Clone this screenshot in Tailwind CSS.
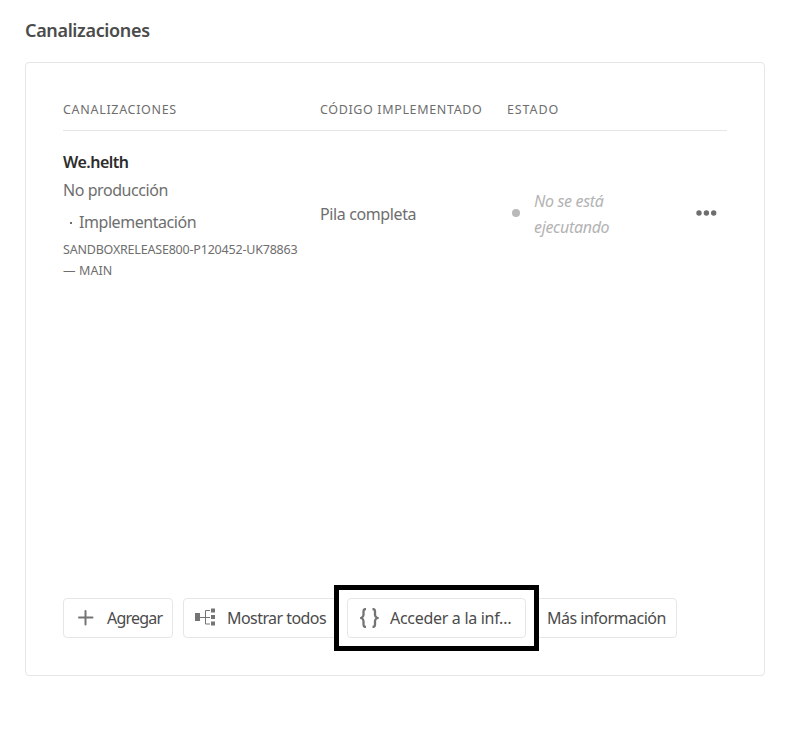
<!DOCTYPE html>
<html lang="es">
<head>
<meta charset="utf-8">
<title>Canalizaciones</title>
<script src="https://cdn.jsdelivr.net/npm/@tailwindcss/browser@4"></script>
</head>
<body class="h-[733px] overflow-hidden bg-white px-[25px] pt-[16px] font-['Noto_Sans','Open_Sans',sans-serif] text-[16px] tracking-[-0.44px] text-[#6e6e6e]">
<h1 class="h-[46px] text-[18px] leading-[28px] font-semibold tracking-[-0.35px] whitespace-nowrap text-[#4b4b4b]">Canalizaciones</h1>
<section class="flex h-[614px] w-[740px] flex-col rounded-[4px] border border-[#e6e6e6] px-[37px] pt-[35px] pb-[37px]">
  <div class="grid h-[33px] w-[664px] grid-cols-[257px_187px_1fr] border-b border-[#e6e6e6] text-[12.5px] leading-[24px] tracking-[0.69px] whitespace-nowrap">
    <div>CANALIZACIONES</div>
    <div class="tracking-[0.64px]">CÓDIGO IMPLEMENTADO</div>
    <div class="tracking-[0.9px]">ESTADO</div>
  </div>
  <div class="grid h-[165px] w-[664px] grid-cols-[257px_187px_1fr_auto] items-center whitespace-nowrap">
    <div class="flex flex-col">
      <span class="h-[28px] leading-[30px] font-semibold tracking-[-0.5px] text-[#2c2c2c]">We.helth</span>
      <span class="h-[28px] leading-[30px]">No producción</span>
      <span class="flex h-[36px] items-center pt-[2px] pl-[7px]"><i class="mt-[2px] mr-[7px] h-[2px] w-[2px] bg-[#6e6e6e]"></i>Implementación</span>
      <span class="text-[12.5px] leading-[21px] tracking-[-0.2px]">SANDBOXRELEASE800-P120452-UK78863<br><span class="tracking-[0.1px]">— MAIN</span></span>
    </div>
    <div class="tracking-[-0.38px]">Pila completa</div>
    <div class="flex items-center pl-[5px] leading-[26px] tracking-[-0.33px] text-[#b3b3b3]">
      <i class="mr-[14px] mb-[2px] h-2 w-2 rounded-full bg-[#b9b9b9]"></i>
      <em>No se está<br>ejecutando</em>
    </div>
    <svg class="mr-[10px] mb-[1px] h-[6px] w-[21px] fill-[#6e6e6e]" viewBox="0 0 21 6"><circle cx="3" cy="3" r="2.7"/><circle cx="10.4" cy="3" r="2.7"/><circle cx="17.7" cy="3" r="2.7"/></svg>
  </div>
  <div class="relative mt-auto flex h-10 whitespace-nowrap text-[#4b4b4b]">
    <button class="mr-[10px] flex h-10 w-[110px] items-center rounded-[4px] border border-[#e6e6e6] pl-[14px] tracking-[-0.8px]">
      <svg class="mr-[13px] h-4 w-4 shrink-0 stroke-[#747474]" viewBox="0 0 16 16" fill="none" stroke-width="2" stroke-linecap="round"><path d="M7.500 1v13.500M1 7.500h13.500"/></svg>
      Agregar
    </button>
    <button class="mr-[10px] flex h-10 w-[154px] items-center rounded-[4px] border border-[#e6e6e6] pl-[11px] tracking-[-0.56px]">
      <svg class="mr-[11px] mb-[2px] h-[18px] w-[21px] shrink-0" viewBox="0 0 21 18"><path fill="#747474" d="M0 5h5v8H0zM16 0.500h4v4h-4zM16 7h4v4h-4zM16 13.500h4v4h-4z"/><path fill="none" stroke="#747474" d="M5 9.500h10M15 2.500h-4.500v13.500h4.500"/></svg>
      Mostrar todos
    </button>
    <button class="mr-[10px] flex h-10 w-[179px] items-center rounded-[4px] border border-[#e6e6e6] pl-[12px] tracking-[-0.3px]">
      <svg class="mr-[11px] mb-[1px] h-[20px] w-[19px] shrink-0 stroke-[#747474]" viewBox="0 0 19 20" fill="none" stroke-width="2.300"><path d="M6 1C4.300 1 3.500 1.700 3.500 3.200V7c0 1.500-.8 2.300-2.300 3 1.500.7 2.300 1.500 2.300 3v3.800c0 1.500.8 2.200 2.500 2.200M12.500 1c1.700 0 2.500.7 2.500 2.200V7c0 1.500.8 2.300 2.300 3-1.500.7-2.300 1.500-2.300 3v3.800c0 1.500-.8 2.200-2.500 2.200"/></svg>
      Acceder a la inf…
    </button>
    <button class="h-10 w-[141px] rounded-[4px] border border-[#e6e6e6] pl-[10px] text-left tracking-[-0.5px]">Más información</button>
    <div class="pointer-events-none absolute top-[-13px] left-[271px] h-[66px] w-[205px] border-[5px] border-black"></div>
  </div>
</section>
</body>
</html>
